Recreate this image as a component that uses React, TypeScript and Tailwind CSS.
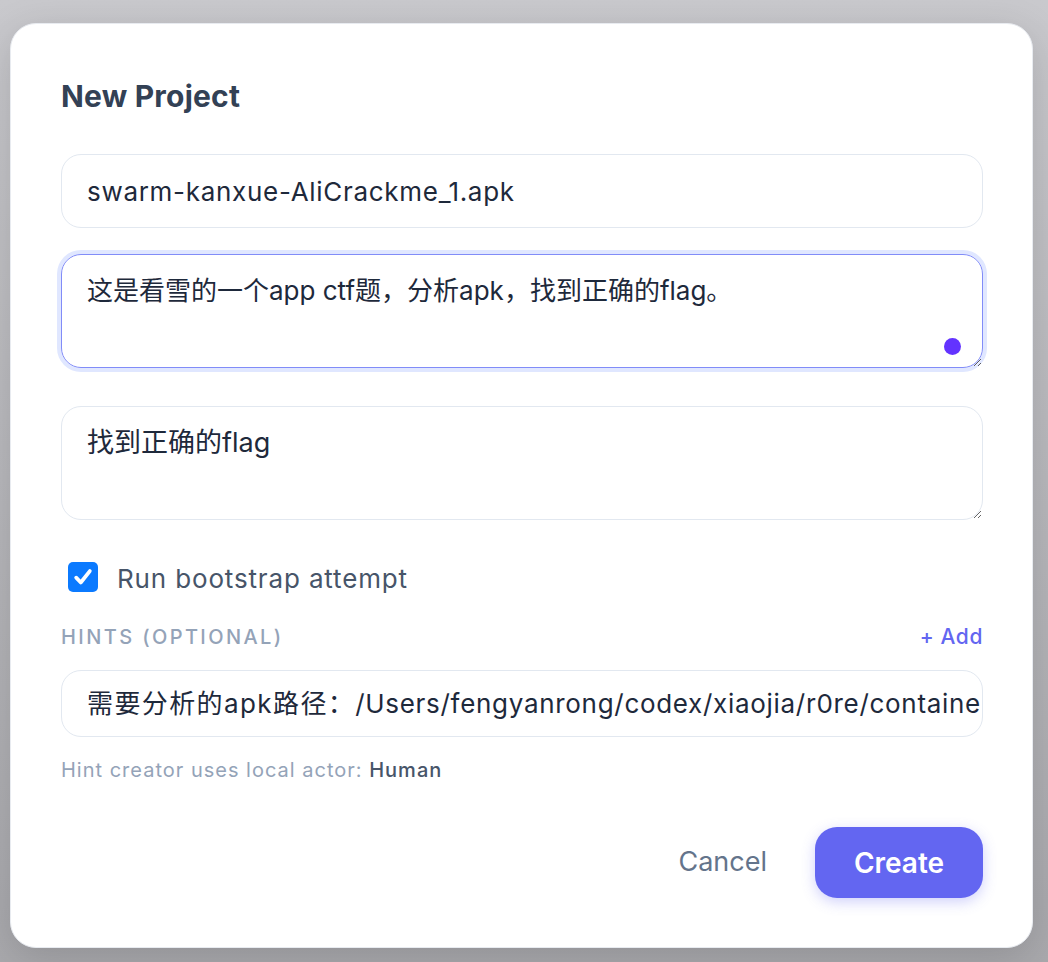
import React from "react";

const font = { fontFamily: "Inter, 'Noto Sans CJK SC', sans-serif" };

export default function App() {
  return (
    <div
      className="w-[1048px] h-[962px] overflow-hidden bg-gradient-to-b from-[#c9c9cd] to-[#a9a9ad] pt-[23px] pl-[10px]"
      style={font}
    >
      <div className="w-[1023px] h-[925px] rounded-[26px] bg-white border border-[#e8ebf0] shadow-[0_10px_40px_rgba(0,0,0,0.15)] pl-[50px] pr-[49px] pt-[54px] flex flex-col">
        <h1 className="text-[30px] leading-[36px] font-bold text-[#334155] tracking-[0.2px]">
          New Project
        </h1>

        <div className="mt-[40px] h-[74px] w-[922px] rounded-[20px] border border-[#e2e8f0] px-[25px] flex items-center text-[26px] tracking-[0.7px] text-[#1e293b]">
          swarm-kanxue-AliCrackme_1.apk
        </div>

        <div className="relative mt-[26px] h-[114px] w-[922px]">
          <textarea
            readOnly
            defaultValue="这是看雪的一个app ctf题，分析apk，找到正确的flag。"
            className="block h-[114px] w-[922px] rounded-[20px] border border-[#818cf8] ring-4 ring-[#e0e7ff] px-[25px] pt-[17px] text-[26px] leading-[38px] text-[#1e293b] outline-none resize-y"
            style={font}
          />
          <div className="absolute right-[22px] bottom-[13px] w-[17px] h-[17px] rounded-full bg-[#6333ff]" />
        </div>

        <textarea
          readOnly
          defaultValue="找到正确的flag"
          className="mt-[38px] block h-[114px] w-[922px] rounded-[20px] border border-[#e2e8f0] px-[25px] pt-[17px] text-[27px] leading-[38px] text-[#1e293b] outline-none resize-y"
          style={font}
        />

        <div className="mt-[42px] h-[32px] flex items-center pl-[7px]">
          <div className="w-[30px] h-[30px] -mt-[3px] rounded-[5px] bg-[#0b7aff] flex items-center justify-center">
            <svg width="22" height="22" viewBox="0 0 20 20">
              <path d="M3.8 10.6 L8 15 L16.2 4.6" fill="none" stroke="white" strokeWidth="3.4" strokeLinecap="round" strokeLinejoin="round" />
            </svg>
          </div>
          <span className="ml-[19px] text-[26px] tracking-[0.85px] text-[#475569]">Run bootstrap attempt</span>
        </div>

        <div className="mt-[29px] h-[28px] flex items-center justify-between">
          <span className="text-[20px] font-medium tracking-[2.4px] text-[#94a3b8]">HINTS (OPTIONAL)</span>
          <span className="text-[21px] font-medium tracking-[0.6px] text-[#6366f1]">+ Add</span>
        </div>

        <div className="mt-[19px] h-[67px] w-[922px] rounded-[20px] border border-[#e2e8f0] pl-[25px] flex items-center overflow-hidden whitespace-nowrap text-[26px] tracking-[0.7px] text-[#1e293b]">
          <span className="tracking-[1.4px]">需要分析的apk路径：</span>
          <span>/Users/fengyanrong/codex/xiaojia/r0re/containers/kanxue/AliCrackme_1.apk</span>
        </div>

        <div className="mt-[19px] h-[28px] flex items-center text-[20px] tracking-[1px] text-[#94a3b8]">
          Hint creator uses local actor:&nbsp;<span className="font-medium text-[#475569]">Human</span>
        </div>

        <div className="mt-[43px] flex items-center justify-end">
          <span className="text-[27px] text-[#64748b] mr-[48px]">Cancel</span>
          <div className="w-[168px] h-[71px] rounded-[22px] bg-[#6366f1] shadow-[0_4px_14px_rgba(99,102,241,0.3)] flex items-center justify-center text-[28px] font-semibold text-white">
            Create
          </div>
        </div>
      </div>
    </div>
  );
}
